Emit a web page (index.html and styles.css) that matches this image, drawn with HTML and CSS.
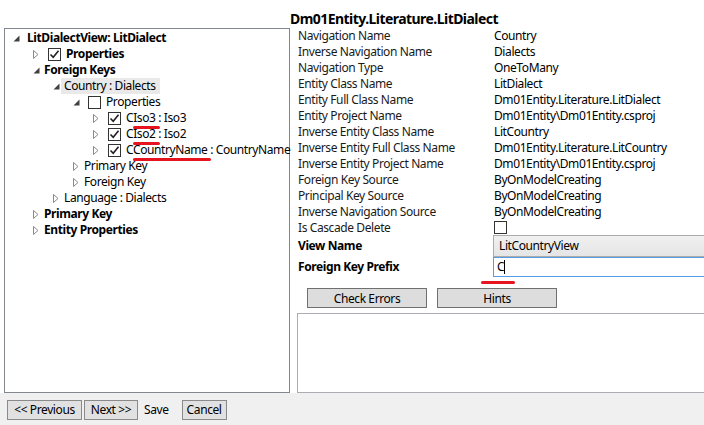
FILE: index.html
```html
<!DOCTYPE html>
<html>
<head>
<meta charset="utf-8">
<link rel="stylesheet" href="styles.css">
</head>
<body>
<div class="window">
  <div class="main">
    <div class="tree-panel">
      <ul class="tree root">
        <li>
          <div class="row bold"><span class="exp first"><svg width="7" height="7" viewBox="0 0 7 7"><path d="M6.5 0.5 L6.5 6.5 L0.5 6.5 Z" fill="#404040"/></svg></span><span>LitDialectView: LitDialect</span></div>
          <ul class="tree">
            <li><div class="row bold"><span class="exp"><svg width="6" height="9" viewBox="0 0 6 9"><path d="M0.5 0.5 L5 4.5 L0.5 8.5 Z" fill="none" stroke="#8a8a8a"/></svg></span><span class="cb checked"><svg width="11" height="11" viewBox="0 0 11 11"><path d="M1.5 5.5 L4.2 8.2 L9.5 1.8" fill="none" stroke="#202020" stroke-width="1.6"/></svg></span><span>Properties</span></div></li>
            <li>
              <div class="row bold"><span class="exp"><svg width="7" height="7" viewBox="0 0 7 7"><path d="M6.5 0.5 L6.5 6.5 L0.5 6.5 Z" fill="#404040"/></svg></span><span>Foreign Keys</span></div>
              <ul class="tree">
                <li>
                  <div class="row"><span class="exp"><svg width="7" height="7" viewBox="0 0 7 7"><path d="M6.5 0.5 L6.5 6.5 L0.5 6.5 Z" fill="#404040"/></svg></span><span class="sel">Country : Dialects</span></div>
                  <ul class="tree">
                    <li>
                      <div class="row"><span class="exp"><svg width="7" height="7" viewBox="0 0 7 7"><path d="M6.5 0.5 L6.5 6.5 L0.5 6.5 Z" fill="#404040"/></svg></span><span class="cb"></span><span>Properties</span></div>
                      <ul class="tree">
                        <li><div class="row"><span class="exp"><svg width="6" height="9" viewBox="0 0 6 9"><path d="M0.5 0.5 L5 4.5 L0.5 8.5 Z" fill="none" stroke="#8a8a8a"/></svg></span><span class="cb checked"><svg width="11" height="11" viewBox="0 0 11 11"><path d="M1.5 5.5 L4.2 8.2 L9.5 1.8" fill="none" stroke="#202020" stroke-width="1.6"/></svg></span><span>C<span class="mark">Iso3</span> : Iso3</span></div></li>
                        <li><div class="row"><span class="exp"><svg width="6" height="9" viewBox="0 0 6 9"><path d="M0.5 0.5 L5 4.5 L0.5 8.5 Z" fill="none" stroke="#8a8a8a"/></svg></span><span class="cb checked"><svg width="11" height="11" viewBox="0 0 11 11"><path d="M1.5 5.5 L4.2 8.2 L9.5 1.8" fill="none" stroke="#202020" stroke-width="1.6"/></svg></span><span>C<span class="mark">Iso2</span> : Iso2</span></div></li>
                        <li><div class="row"><span class="exp"><svg width="6" height="9" viewBox="0 0 6 9"><path d="M0.5 0.5 L5 4.5 L0.5 8.5 Z" fill="none" stroke="#8a8a8a"/></svg></span><span class="cb checked"><svg width="11" height="11" viewBox="0 0 11 11"><path d="M1.5 5.5 L4.2 8.2 L9.5 1.8" fill="none" stroke="#202020" stroke-width="1.6"/></svg></span><span>C<span class="mark">CountryName</span> : CountryName</span></div></li>
                      </ul>
                    </li>
                    <li><div class="row"><span class="exp"><svg width="6" height="9" viewBox="0 0 6 9"><path d="M0.5 0.5 L5 4.5 L0.5 8.5 Z" fill="none" stroke="#8a8a8a"/></svg></span><span>Primary Key</span></div></li>
                    <li><div class="row"><span class="exp"><svg width="6" height="9" viewBox="0 0 6 9"><path d="M0.5 0.5 L5 4.5 L0.5 8.5 Z" fill="none" stroke="#8a8a8a"/></svg></span><span>Foreign Key</span></div></li>
                  </ul>
                </li>
                <li><div class="row"><span class="exp"><svg width="6" height="9" viewBox="0 0 6 9"><path d="M0.5 0.5 L5 4.5 L0.5 8.5 Z" fill="none" stroke="#8a8a8a"/></svg></span><span>Language : Dialects</span></div></li>
              </ul>
            </li>
            <li><div class="row bold"><span class="exp"><svg width="6" height="9" viewBox="0 0 6 9"><path d="M0.5 0.5 L5 4.5 L0.5 8.5 Z" fill="none" stroke="#8a8a8a"/></svg></span><span>Primary Key</span></div></li>
            <li><div class="row bold"><span class="exp"><svg width="6" height="9" viewBox="0 0 6 9"><path d="M0.5 0.5 L5 4.5 L0.5 8.5 Z" fill="none" stroke="#8a8a8a"/></svg></span><span>Entity Properties</span></div></li>
          </ul>
        </li>
      </ul>
    </div>

    <div class="right">
      <div class="title">Dm01Entity.Literature.LitDialect</div>
      <div class="props">
        <div class="lbl">Navigation Name</div><div class="val">Country</div>
        <div class="lbl">Inverse Navigation Name</div><div class="val">Dialects</div>
        <div class="lbl">Navigation Type</div><div class="val">OneToMany</div>
        <div class="lbl">Entity Class Name</div><div class="val">LitDialect</div>
        <div class="lbl">Entity Full Class Name</div><div class="val">Dm01Entity.Literature.LitDialect</div>
        <div class="lbl">Entity Project Name</div><div class="val">Dm01Entity\Dm01Entity.csproj</div>
        <div class="lbl">Inverse Entity Class Name</div><div class="val">LitCountry</div>
        <div class="lbl">Inverse Entity Full Class Name</div><div class="val">Dm01Entity.Literature.LitCountry</div>
        <div class="lbl">Inverse Entity Project Name</div><div class="val">Dm01Entity\Dm01Entity.csproj</div>
        <div class="lbl">Foreign Key Source</div><div class="val">ByOnModelCreating</div>
        <div class="lbl">Principal Key Source</div><div class="val">ByOnModelCreating</div>
        <div class="lbl">Inverse Navigation Source</div><div class="val">ByOnModelCreating</div>
        <div class="lbl">Is Cascade Delete</div><div class="val"><span class="cb plain"></span></div>
        <div class="lbl strong">View Name</div><div class="val"><div class="combo">LitCountryView</div></div>
        <div class="lbl strong">Foreign Key Prefix</div><div class="val"><div class="textbox">C<span class="caret"></span></div><span class="redline"></span></div>
      </div>
      <div class="actions">
        <button class="btn wide">Check Errors</button>
        <button class="btn wide">Hints</button>
      </div>
      <div class="output"></div>
    </div>
  </div>
  <div class="footer">
    <button class="btn small prev">&lt;&lt; Previous</button>
    <button class="btn small next">Next &gt;&gt;</button>
    <span class="save">Save</span>
    <button class="btn small cancel">Cancel</button>
  </div>
</div>
</body>
</html>
```

FILE: styles.css
```css
html, body {
  margin: 0;
  padding: 0;
  overflow: hidden;
}
body {
  font-family: "Noto Sans", "Open Sans", sans-serif;
  font-size: 12px;
  letter-spacing: -0.4px;
  color: #000;
  background: #f0f0f0;
}
.window {
  width: 720px;
  height: 425px;
  display: flex;
  flex-direction: column;
}
.main {
  height: 393px;
  background: #fff;
  display: flex;
}
.tree-panel {
  box-sizing: border-box;
  width: 286px;
  height: 365px;
  margin: 28px 0 0 4px;
  border: 1px solid #828790;
  padding-top: 1px;
  padding-left: 8px;
}
.tree {
  list-style: none;
  margin: 0;
  padding: 0 0 0 20px;
}
.tree.root {
  padding-left: 0;
}
.row {
  display: flex;
  align-items: center;
  height: 16px;
  white-space: nowrap;
  line-height: 16px;
}
.row.bold {
  font-weight: 700;
}
.exp {
  width: 11px;
  height: 16px;
  display: flex;
  align-items: center;
  flex: none;
}
.exp.first {
  width: 14px;
}
.exp svg {
  display: block;
}
.cb {
  box-sizing: border-box;
  width: 13px;
  height: 13px;
  border: 1px solid #333;
  background: #fff;
  margin: 0 5px 0 4px;
  display: inline-flex;
  align-items: center;
  justify-content: center;
  flex: none;
}
.cb svg {
  display: block;
}
.sel {
  background: #e9e9e9;
  padding: 0 4px 0 3px;
  margin-left: -3px;
}
.mark {
  position: relative;
}
.mark::after {
  content: "";
  position: absolute;
  left: 0;
  right: -4px;
  bottom: -3px;
  height: 3px;
  border-radius: 2px;
  background: #e5141e;
}
.right {
  flex: 1;
  display: flex;
  flex-direction: column;
  min-width: 0;
}
.title {
  height: 28px;
  font-weight: 700;
  font-size: 14px;
  letter-spacing: -0.55px;
  line-height: 38px;
  white-space: nowrap;
}
.props {
  display: grid;
  grid-template-columns: 196px 1fr;
  grid-template-rows: repeat(12, 16px) 15px 22px 20px;
  padding-left: 8px;
  line-height: 16px;
}
.lbl, .val {
  white-space: nowrap;
  display: flex;
  align-items: center;
}
.lbl {
  color: #1a1a1a;
}
.strong {
  font-weight: 700;
  color: #000;
}
.cb.plain {
  margin: 0;
  align-self: flex-start;
  margin-top: 1px;
}
.val {
  position: relative;
}
.combo {
  box-sizing: border-box;
  width: 100%;
  height: 22px;
  margin-left: -1px;
  border: 1px solid #acacac;
  background: linear-gradient(#f0f0f0, #e5e5e5);
  padding-left: 5px;
  line-height: 20px;
}
.textbox {
  box-sizing: border-box;
  width: 100%;
  height: 20px;
  margin-left: -1px;
  border: 1px solid #569de5;
  background: #fff;
  padding-left: 3px;
  display: flex;
  align-items: center;
}
.caret {
  width: 1px;
  height: 14px;
  background: #000;
}
.redline {
  position: absolute;
  left: -13px;
  top: 24px;
  width: 34px;
  height: 3px;
  border-radius: 2px;
  background: #e5141e;
}
.actions {
  margin-top: 11px;
  padding-left: 17px;
  display: flex;
  gap: 10px;
}
.btn {
  box-sizing: border-box;
  font-family: inherit;
  font-size: 12px;
  letter-spacing: -0.4px;
  color: #000;
  background: #dddddd;
  border: 1px solid #707070;
  border-radius: 0;
  padding: 0;
  height: 20px;
  line-height: 17px;
  margin: 0;
}
.btn.wide {
  width: 120px;
}
.output {
  box-sizing: border-box;
  margin: 5px 0 0 7px;
  height: 80px;
  border: 1px solid #abadb3;
  border-right: none;
  background: #fff;
}
.footer {
  flex: 1;
  display: flex;
  align-items: center;
  padding-left: 7px;
  padding-top: 1px;
  gap: 2px;
}
.btn.small {
  background: #e1e1e1;
  border-color: #8a8a8a;
  height: 20px;
}
.prev {
  width: 75px;
}
.next {
  width: 54px;
}
.save {
  margin: 0 11px 0 4px;
}
.cancel {
  width: 45px;
}
```
